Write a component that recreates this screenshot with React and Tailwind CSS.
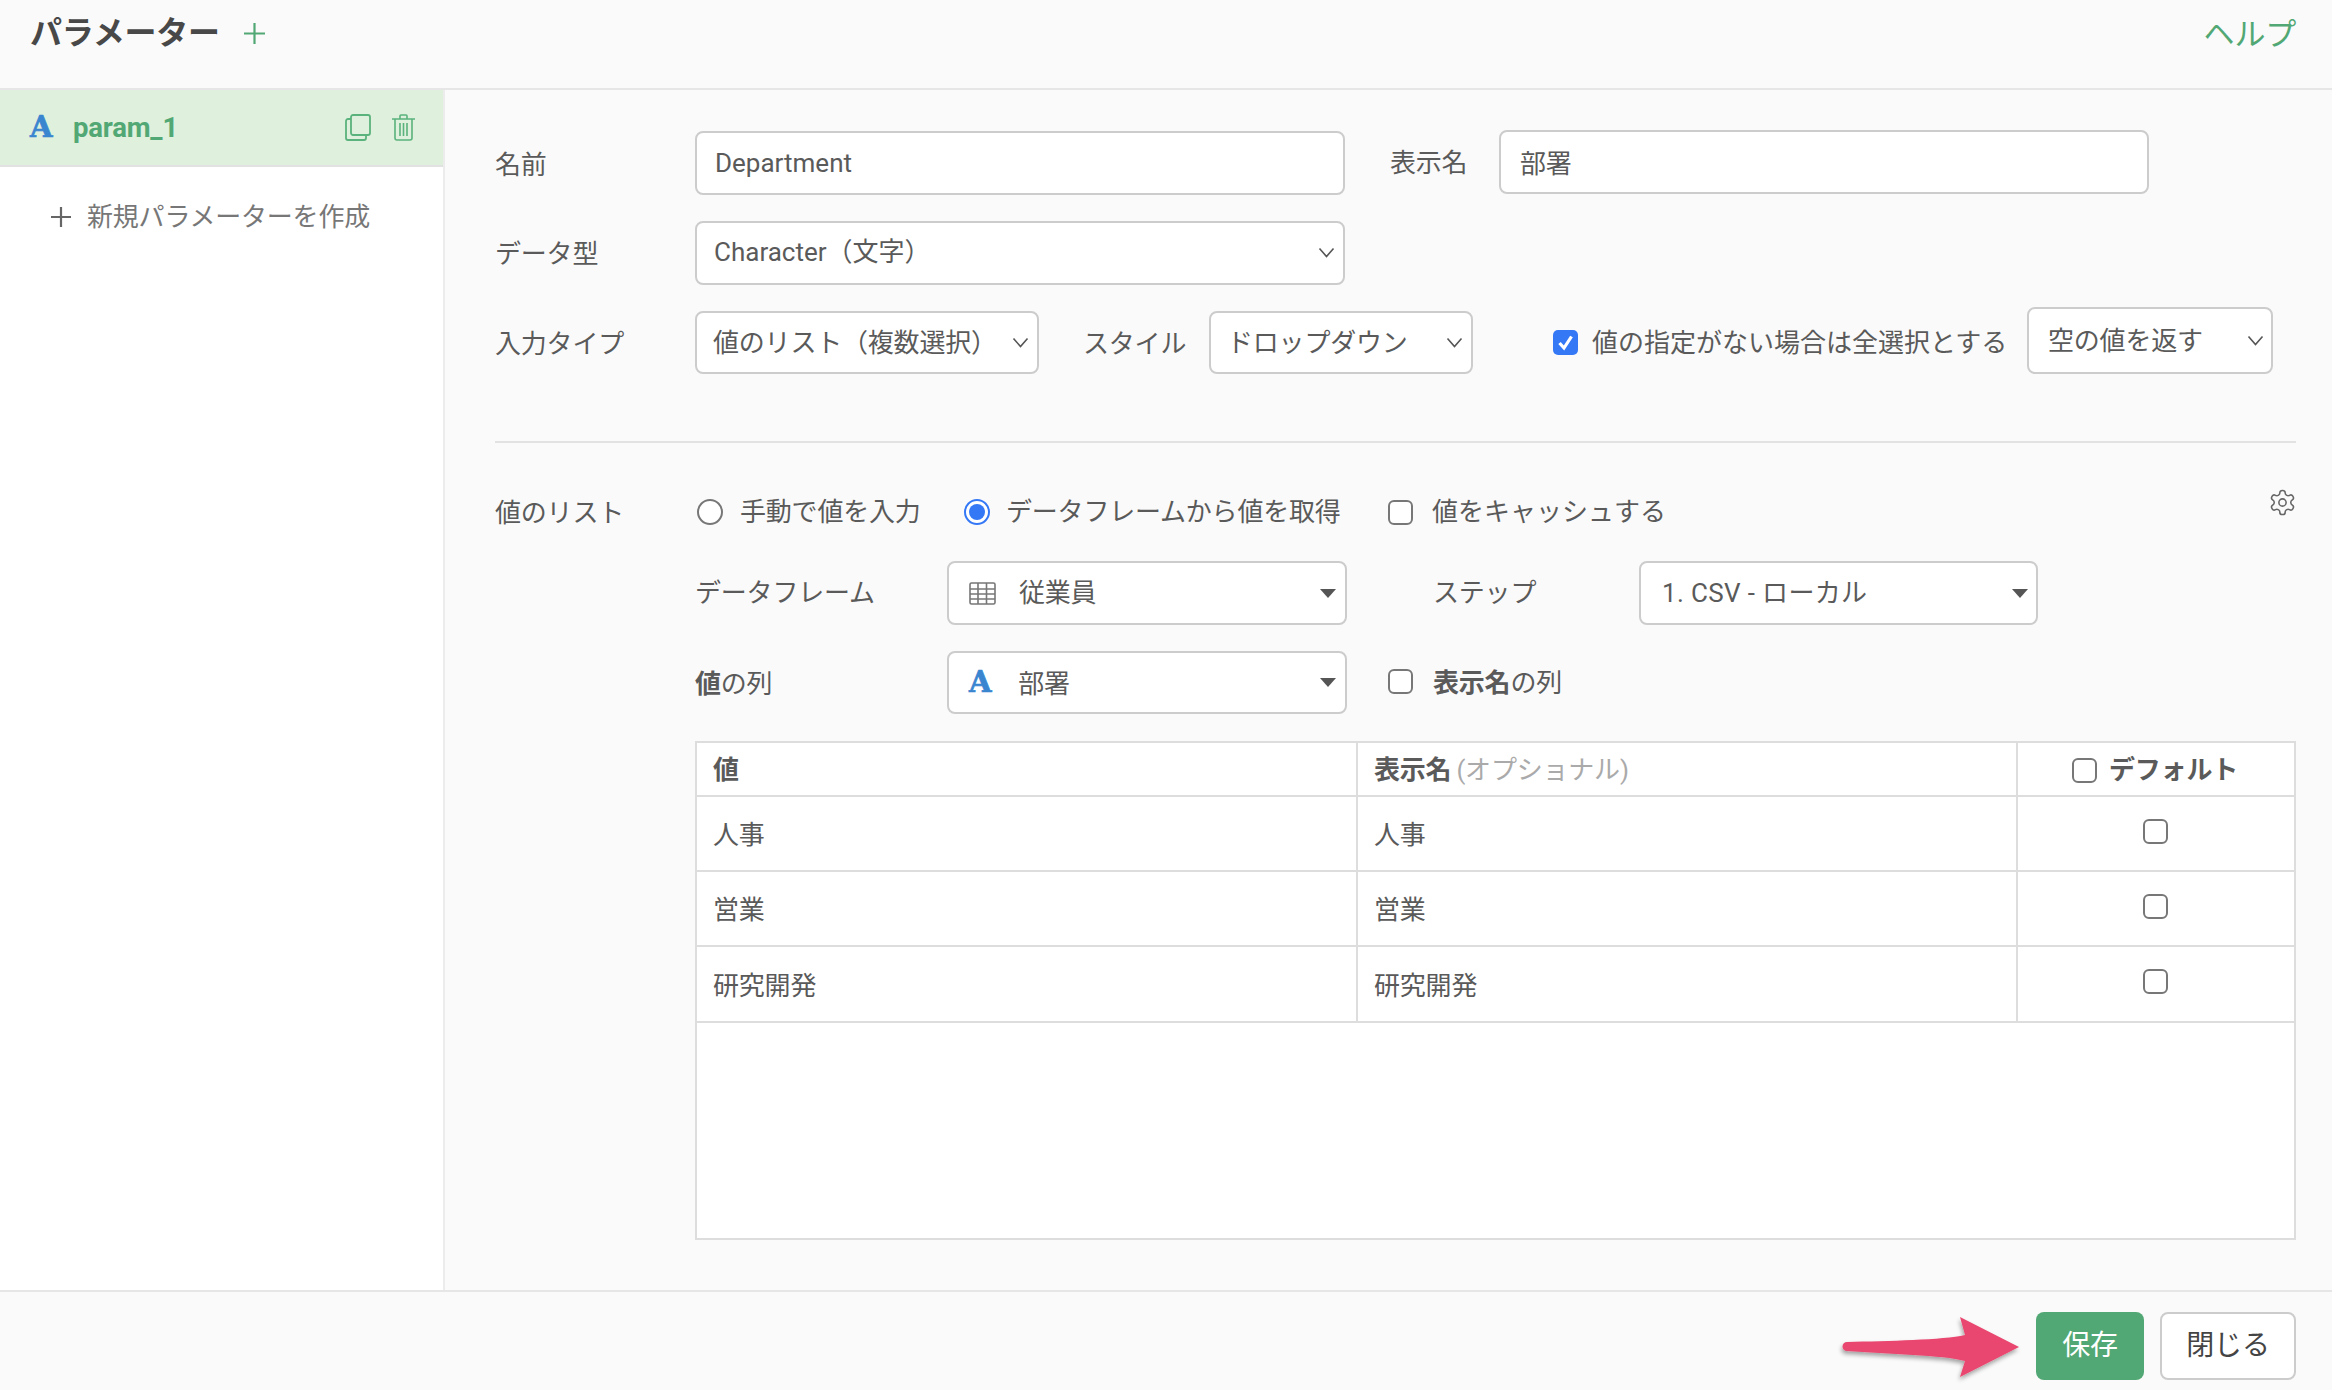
import React from "react";

const Chevron = () => (
  <svg width="17" height="11" viewBox="0 0 17 11" fill="none" stroke="#555" strokeWidth="1.6" className="shrink-0">
    <path d="M1.5 1.5 L8.5 9.5 L15.5 1.5" />
  </svg>
);

const Caret = () => (
  <svg width="16" height="9" viewBox="0 0 16 9" fill="#555" className="shrink-0">
    <path d="M0 0 H16 L8 9 Z" />
  </svg>
);

const Check = () => (
  <span className="block w-[25px] h-[25px] shrink-0 rounded-[6px] border-2 border-[#777] bg-white" />
);

const AType = () => (
  <span className="font-['DejaVu_Serif',serif] font-bold text-[29px] leading-none text-[#3a85d0] [-webkit-text-stroke:0.7px_#3a85d0]">A</span>
);

const Select = ({ className, children, pad = "pl-[17px] pr-[8px]" }) => (
  <div className={`flex items-center justify-between bg-white border-2 border-[#ccc] rounded-[8px] ${pad} ${className}`}>
    {children}
  </div>
);

function Row({ a, c }) {
  return (
    <div className={`grid grid-cols-[661px_660px_1fr] border-b-2 border-[#ddd] ${c}`}>
      <div className="flex items-center pl-[16px] border-r-2 border-[#ddd] pt-[3px]">{a}</div>
      <div className="flex items-center pl-[16px] border-r-2 border-[#ddd] pt-[3px]">{a}</div>
      <div className="flex justify-center pt-[22px] pr-[2px]"><Check /></div>
    </div>
  );
}

export default function App() {
  return (
    <div className="w-[2332px] h-[1390px] flex flex-col overflow-hidden bg-[#fafafa] text-[#5a5a5a] text-[26px] tracking-[-0.2px] leading-none font-['Roboto','Noto_Sans_CJK_JP',sans-serif]">
      {/* header */}
      <header className="h-[90px] shrink-0 flex items-start justify-between border-b-2 border-[#e6e6e6] pl-[30px] pr-[36px]">
        <div className="flex items-center pt-[17px]">
          <h1 className="text-[32px] leading-[32px] font-bold text-[#484848]">パラメーター</h1>
          <svg width="21" height="21" viewBox="0 0 21 21" stroke="#52a874" strokeWidth="2.2" className="ml-[24px]">
            <path d="M10.5 0 V21 M0 10.5 H21" />
          </svg>
        </div>
        <a className="pt-[19px] text-[31px] leading-[31px] text-[#52a874]">ヘルプ</a>
      </header>

      {/* middle */}
      <div className="flex flex-1 min-h-0">
        <aside className="w-[445px] shrink-0 bg-white border-r-2 border-[#ececec]">
          <div className="h-[77px] flex items-center bg-[#dff0dc] border-b-2 border-[#e2e2e2] pl-[30px] pr-[28px]">
            <span className="w-[43px]"><AType /></span>
            <span className="font-bold text-[#52a874] text-[27.5px]">param_1</span>
            <svg width="26" height="27" viewBox="0 0 26 27" fill="none" stroke="#5ab27c" strokeWidth="1.8" className="ml-auto mr-[-1px]">
              <rect x="6" y="1" width="19" height="20" rx="2" />
              <path d="M6 5 H3 A2 2 0 0 0 1 7 V24 A2 2 0 0 0 3 26 H19 A2 2 0 0 0 21 24 V21" />
            </svg>
            <svg width="23" height="27" viewBox="0 0 23 27" fill="none" stroke="#5ab27c" strokeWidth="1.6" className="ml-[22px]">
              <path d="M0 5 H23 M8 5 V2 A1 1 0 0 1 9 1 H14 A1 1 0 0 1 15 2 V5 M3 5 V24 A2 2 0 0 0 5 26 H18 A2 2 0 0 0 20 24 V5 M8 9 V22 M11.5 9 V22 M15 9 V22" />
            </svg>
          </div>
          <div className="flex items-center pl-[51px] pt-[37px] text-[#777]">
            <svg width="20" height="20" viewBox="0 0 20 20" stroke="#666" strokeWidth="2.2">
              <path d="M10 0 V20 M0 10 H20" />
            </svg>
            <span className="ml-[16px]">新規パラメーターを作成</span>
          </div>
        </aside>

        <main className="flex-1 min-w-0 pl-[50px] pr-[36px] pt-[41px]">
          <div className="flex items-center h-[64px]">
            <label className="w-[200px] pt-[3px]">名前</label>
            <input readOnly value="Department" className="w-[650px] h-[64px] bg-white border-2 border-[#ccc] rounded-[8px] pl-[18px] text-[#5a5a5a] tracking-normal outline-none" />
            <label className="ml-[45px] w-[109px]">表示名</label>
            <input readOnly value="部署" className="w-[650px] h-[64px] -mt-[2px] bg-white border-2 border-[#ccc] rounded-[8px] pl-[19px] pb-[2px] text-[#5a5a5a] outline-none" />
          </div>

          <div className="flex items-center h-[63px] mt-[26px]">
            <label className="w-[200px] pt-[2px]">データ型</label>
            <Select className="w-[650px] h-[64px]">
              <span className="pb-[2px] tracking-normal">Character（文字）</span>
              <Chevron />
            </Select>
          </div>

          <div className="flex items-center h-[63px] mt-[27px]">
            <label className="w-[200px] pt-[3px]">入力タイプ</label>
            <Select className="w-[344px] h-[63px]" pad="pl-[16px] pr-[8px]">
              <span>値のリスト（複数選択）</span>
              <Chevron />
            </Select>
            <label className="ml-[44px] w-[126px] pt-[3px]">スタイル</label>
            <Select className="w-[264px] h-[63px]" pad="pl-[16px] pr-[8px]">
              <span>ドロップダウン</span>
              <Chevron />
            </Select>
            <span className="ml-[80px] w-[25px] h-[25px] shrink-0 rounded-[5px] bg-[#3478f6] flex items-center justify-center">
              <svg width="17" height="17" viewBox="0 0 17 17" fill="none" stroke="#fff" strokeWidth="3.2">
                <path d="M2.5 9 L7 14 L14.5 2.5" />
              </svg>
            </span>
            <span className="ml-[14px] w-[435px] shrink-0 tracking-normal">値の指定がない場合は全選択とする</span>
            <Select className="w-[246px] h-[67px] -mt-[4px]" pad="pl-[19px] pr-[7px]">
              <span>空の値を返す</span>
              <Chevron />
            </Select>
          </div>

          <hr className="mt-[67px] h-[2px] border-0 bg-[#e2e2e2]" />

          <div className="flex items-center h-[26px] mt-[56px]">
            <label className="w-[202px] pt-[2px]">値のリスト</label>
            <span className="w-[26px] h-[26px] shrink-0 rounded-full border-2 border-[#777] bg-white" />
            <span className="ml-[17px] w-[224px] shrink-0">手動で値を入力</span>
            <span className="w-[26px] h-[26px] shrink-0 rounded-full border-2 border-[#3478f6] bg-white flex items-center justify-center">
              <span className="block w-[16px] h-[16px] rounded-full bg-[#3478f6]" />
            </span>
            <span className="ml-[16px] w-[382px] shrink-0">データフレームから値を取得</span>
            <Check />
            <span className="ml-[19px] tracking-normal">値をキャッシュする</span>
            <svg width="29" height="29" viewBox="0 0 24 24" fill="none" stroke="#666" strokeWidth="1.3" strokeLinecap="round" strokeLinejoin="round" className="ml-auto -mt-[20px] -mr-[1px]">
              <path d="M12.22 2h-.44a2 2 0 0 0-2 2v.18a2 2 0 0 1-1 1.73l-.43.25a2 2 0 0 1-2 0l-.15-.08a2 2 0 0 0-2.73.73l-.22.38a2 2 0 0 0 .73 2.73l.15.1a2 2 0 0 1 1 1.72v.51a2 2 0 0 1-1 1.74l-.15.09a2 2 0 0 0-.73 2.73l.22.38a2 2 0 0 0 2.73.73l.15-.08a2 2 0 0 1 2 0l.43.25a2 2 0 0 1 1 1.73V20a2 2 0 0 0 2 2h.44a2 2 0 0 0 2-2v-.18a2 2 0 0 1 1-1.73l.43-.25a2 2 0 0 1 2 0l.15.08a2 2 0 0 0 2.73-.73l.22-.39a2 2 0 0 0-.73-2.73l-.15-.08a2 2 0 0 1-1-1.74v-.5a2 2 0 0 1 1-1.74l.15-.09a2 2 0 0 0 .73-2.73l-.22-.38a2 2 0 0 0-2.73-.73l-.15.08a2 2 0 0 1-2 0l-.43-.25a2 2 0 0 1-1-1.73V4a2 2 0 0 0-2-2z" />
              <circle cx="12" cy="12" r="3" />
            </svg>
          </div>

          <div className="flex items-center h-[64px] mt-[36px] ml-[200px]">
            <label className="w-[252px]">データフレーム</label>
            <Select className="w-[400px] h-[64px]" pad="pl-[20px] pr-[9px]">
              <span className="flex items-center">
                <svg width="27" height="23" viewBox="0 0 27 23" fill="none" stroke="#777" strokeWidth="1.6">
                  <rect x="1" y="1" width="25" height="21" rx="1.5" />
                  <path d="M1 7 H26 M1 12 H26 M1 17 H26 M9 1 V22 M17.5 1 V22" />
                </svg>
                <span className="ml-[23px]">従業員</span>
              </span>
              <Caret />
            </Select>
            <label className="ml-[86px] w-[206px] -mt-[1px]">ステップ</label>
            <Select className="w-[399px] h-[64px]" pad="pl-[21px] pr-[8px]">
              <span className="tracking-[0.35px]">1. CSV - ローカル</span>
              <Caret />
            </Select>
          </div>

          <div className="flex items-center h-[63px] mt-[26px] ml-[200px]">
            <label className="w-[252px] pt-[2px]"><b>値</b>の列</label>
            <Select className="w-[400px] h-[63px]" pad="pl-[20px] pr-[9px]">
              <span className="flex items-center">
                <AType />
                <span className="ml-[27px] pt-[2px]">部署</span>
              </span>
              <Caret />
            </Select>
            <span className="ml-[41px] -mt-[3px]"><Check /></span>
            <span className="ml-[20px]"><b>表示名</b>の列</span>
          </div>

          <div className="h-[499px] mt-[27px] ml-[200px] bg-white border-2 border-[#ddd]">
            <div className="grid grid-cols-[661px_660px_1fr] h-[54px] border-b-2 border-[#ddd]">
              <div className="flex items-center pl-[16px] pt-[2px] border-r-2 border-[#ddd] font-bold">値</div>
              <div className="flex items-center pl-[16px] pt-[2px] border-r-2 border-[#ddd]">
                <b>表示名</b>
                <span className="ml-[5px] text-[#aaa]">(オプショナル)</span>
              </div>
              <div className="flex items-center pl-[54px] pt-[2px]">
                <Check />
                <b className="ml-[12px]">デフォルト</b>
              </div>
            </div>
            <Row a="人事" c="h-[75px]" />
            <Row a="営業" c="h-[75px]" />
            <Row a="研究開発" c="h-[76px]" />
          </div>
        </main>
      </div>

      {/* footer */}
      <footer className="h-[100px] shrink-0 flex items-start justify-end border-t-2 border-[#e6e6e6] pt-[20px] pr-[36px] relative">
        <svg width="190" height="70" viewBox="0 0 190 70" className="absolute left-[1838px] top-[18px] overflow-visible">
          <defs>
            <filter id="s" x="-10%" y="-20%" width="120%" height="150%">
              <feDropShadow dx="-1" dy="3" stdDeviation="2" floodColor="#000" floodOpacity="0.35" />
            </filter>
          </defs>
          <path
            d="M9 32 C 50 31, 105 30, 127 25 L122 7 L181 37 L122 67 L127 51 C 105 45, 50 44, 9 41 A4 4 0 0 1 9 32 Z"
            fill="#e9466f"
            filter="url(#s)"
          />
        </svg>
        <button className="w-[108px] h-[68px] rounded-[8px] bg-[#52a874] text-white text-[28px]">保存</button>
        <button className="ml-[16px] w-[136px] h-[68px] rounded-[8px] bg-white border-2 border-[#ccc] text-[#444] text-[28px]">閉じる</button>
      </footer>
    </div>
  );
}
